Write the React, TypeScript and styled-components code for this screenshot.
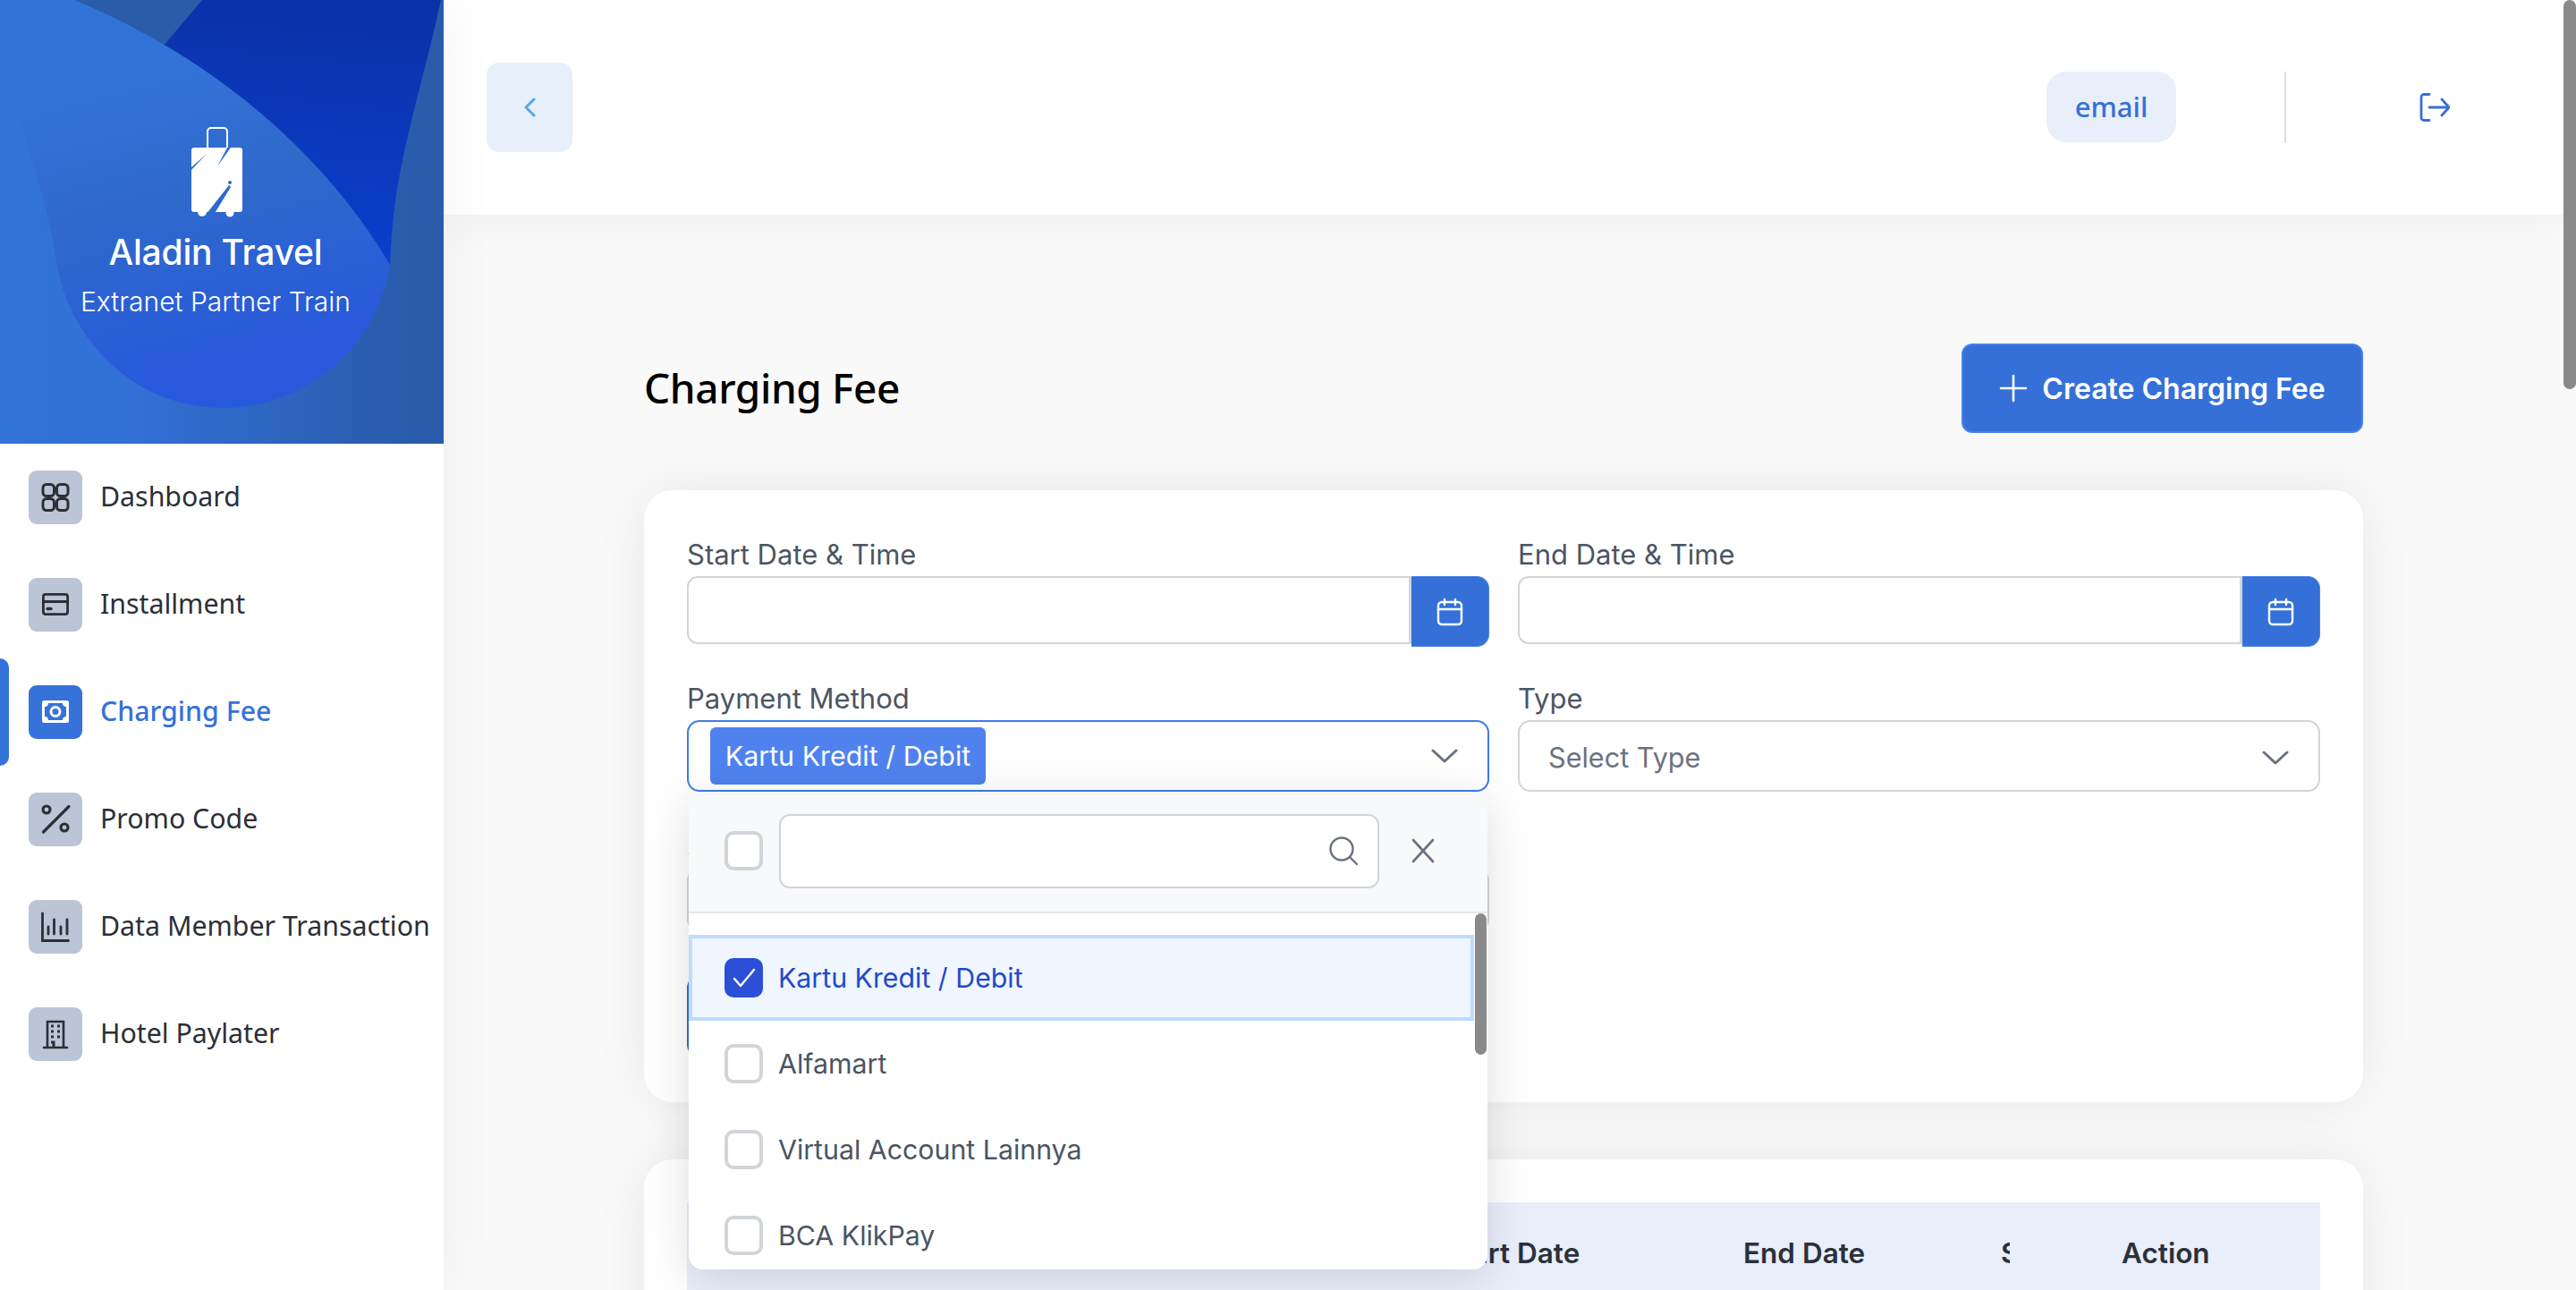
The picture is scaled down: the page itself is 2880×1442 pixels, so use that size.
import React from "react";
import styled, { createGlobalStyle } from "styled-components";

const Global = createGlobalStyle`
  html, body { margin: 0; padding: 0; background: #f9f9f9; }
  body { font-family: Inter, "Liberation Sans", sans-serif; }
  * { box-sizing: border-box; }
`;

const Page = styled.div`
  position: relative;
  display: flex;
  width: 2880px;
  height: 1442px;
  overflow: hidden;
  background: #f9f9f9;
`;

const PageScrollThumb = styled.div`
  position: absolute;
  top: 0;
  right: 0;
  width: 14px;
  height: 435px;
  border-radius: 7px;
  background: #8a8a8a;
  z-index: 20;
`;

const Sidebar = styled.aside`
  position: relative;
  z-index: 3;
  flex: 0 0 496px;
  background: #fff;
  box-shadow: 0 0 60px rgba(0, 0, 0, 0.05);
`;

const Brand = styled.div`
  position: relative;
  height: 496px;
  padding: 142px 14px 0 0;
  display: flex;
  flex-direction: column;
  align-items: center;
  overflow: hidden;
  color: #fff;
`;

const BrandArt = styled.svg`
  position: absolute;
  inset: 0;
  width: 496px;
  height: 496px;
`;

const BrandLogo = styled.svg`
  position: relative;
  width: 60px;
  height: 102px;
`;

const BrandName = styled.div`
  position: relative;
  margin-top: 10px;
  font-family: Inter, sans-serif;
  font-size: 39px;
  line-height: 56px;
  font-weight: 500;
  letter-spacing: -0.2px;
`;

const BrandSub = styled.div`
  position: relative;
  margin-top: 4px;
  font-family: Inter, sans-serif;
  font-size: 30px;
  line-height: 46px;
  font-weight: 300;
`;

const Nav = styled.nav`
  display: flex;
  flex-direction: column;
`;

const NavItem = styled.div<{ $active?: boolean }>`
  position: relative;
  height: 120px;
  padding-left: 32px;
  display: flex;
  align-items: center;
  gap: 20px;
  font-family: "Noto Sans", sans-serif;
  font-size: 30.3px;
  color: ${(p) => (p.$active ? "#3572d9" : "#2b2f36")};
  font-weight: ${(p) => (p.$active ? 500 : 400)};
`;

const NavLabel = styled.span`
  margin-bottom: 3px;
`;

const NavMark = styled.span`
  position: absolute;
  left: 0;
  top: 0;
  width: 10px;
  height: 120px;
  background: #3572d9;
  border-radius: 0 10px 10px 0;
`;

const NavIconBox = styled.span<{ $active?: boolean }>`
  flex: 0 0 60px;
  width: 60px;
  height: 60px;
  border-radius: 9px;
  background: ${(p) => (p.$active ? "#3572d9" : "#bcc5d6")};
  display: flex;
`;

const NavSvg = styled.svg`
  width: 60px;
  height: 60px;
`;

const Main = styled.main`
  flex: 1;
  min-width: 0;
  display: flex;
  flex-direction: column;
`;

const TopBar = styled.header`
  position: relative;
  z-index: 2;
  flex: 0 0 240px;
  background: #fff;
  box-shadow: 0 0 60px rgba(0, 0, 0, 0.05);
  display: flex;
  align-items: center;
  padding-left: 48px;
`;

const BackButton = styled.div`
  width: 96px;
  height: 100px;
  border-radius: 14px;
  background: #e7effa;
  display: flex;
  align-items: center;
  justify-content: center;
`;

const EmailChip = styled.div`
  margin-left: auto;
  margin-bottom: 1px;
  width: 145px;
  height: 79px;
  padding-bottom: 2px;
  border-radius: 22px;
  background: #e8effb;
  color: #3570d8;
  font-family: "Noto Sans", sans-serif;
  font-size: 31px;
  font-weight: 500;
  display: flex;
  align-items: center;
  justify-content: center;
`;

const TopDivider = styled.div`
  width: 2px;
  height: 80px;
  margin-left: 121px;
  background: #dedede;
`;

const LogoutIcon = styled.svg`
  width: 34px;
  height: 32px;
  margin-left: 149px;
  margin-right: 141px;
`;

const Content = styled.div`
  padding: 144px 238px 0 224px;
`;

const TitleRow = styled.div`
  height: 100px;
  margin-bottom: 64px;
  display: flex;
  align-items: center;
  justify-content: space-between;
`;

const Title = styled.h1`
  margin: 0 0 2px;
  font-family: "Noto Sans", sans-serif;
  font-size: 46px;
  font-weight: 500;
  color: #000;
  letter-spacing: -0.4px;
`;

const CreateButton = styled.div`
  width: 449px;
  height: 100px;
  border-radius: 12px;
  background: #3570d8;
  border: 2px solid #4a80e8;
  color: #fff;
  font-size: 32px;
  font-weight: 600;
  display: flex;
  align-items: center;
  justify-content: center;
  gap: 16px;
`;

const Card = styled.section<{ $height: number; $gap?: number }>`
  height: ${(p) => p.$height}px;
  margin-top: ${(p) => p.$gap ?? 0}px;
  padding: 48px;
  background: #fff;
  border-radius: 32px;
  box-shadow: 0 0 60px rgba(0, 0, 0, 0.07);
`;

const FilterGrid = styled.div`
  display: grid;
  grid-template-columns: 897px 897px;
  column-gap: 32px;
  row-gap: 34px;
  align-items: start;
`;

const Field = styled.div<{ $shift?: number }>`
  position: relative;
  min-width: 0;
  margin-top: ${(p) => p.$shift ?? 0}px;
`;

const Label = styled.div`
  height: 48px;
  font-size: 31px;
  line-height: 48px;
  color: #4b5563;
`;

const DateRow = styled.div`
  display: flex;
  align-items: flex-start;
`;

const DateInput = styled.div`
  flex: 1;
  height: 76px;
  background: #fff;
  border: 2px solid #d1d5db;
  border-right-width: 3px;
  border-radius: 12px 0 0 12px;
`;

const DateButton = styled.div`
  flex: 0 0 87px;
  height: 79px;
  background: #3570d8;
  border-radius: 0 14px 14px 0;
  border: 1px solid #4a80e8;
  border-left: none;
  display: flex;
  align-items: center;
  justify-content: center;
`;

const SelectBox = styled.div<{ $open?: boolean }>`
  height: 80px;
  background: #fff;
  border: 2px solid ${(p) => (p.$open ? "#3f7be8" : "#d1d5db")};
  border-radius: 14px;
  display: flex;
  align-items: center;
  padding: ${(p) => (p.$open ? "0 33px 0 24px" : "3px 33px 0 32px")};
  justify-content: space-between;
  font-size: 30.6px;
  color: #6b7280;
`;

const Chip = styled.span`
  height: 64px;
  width: 308px;
  border-radius: 6px;
  background: #4f82ee;
  color: #fff;
  font-size: 30.4px;
  display: flex;
  align-items: center;
  justify-content: center;
`;

const Chevron = styled.svg`
  width: 30px;
  height: 16px;
`;

const HiddenInput = styled.div`
  height: 68px;
  background: #fff;
  border: 2px solid #d1d5db;
  border-radius: 12px;
`;

const ApplyButton = styled.div`
  width: 320px;
  height: 88px;
  margin-top: 52px;
  border-radius: 12px;
  background: #3570d8;
`;

const Dropdown = styled.div`
  position: absolute;
  top: 128px;
  left: 2px;
  right: 2px;
  height: 534px;
  z-index: 5;
  background: #fff;
  border-radius: 0 0 16px 16px;
  overflow: hidden;
  box-shadow: 0 10px 50px rgba(0, 0, 0, 0.13);
`;

const DropdownHead = styled.div`
  height: 136px;
  padding: 0 0 2px 40px;
  background: #f8f9fb;
  border-bottom: 2px solid #e5e7eb;
  display: flex;
  align-items: center;
  gap: 18px;
`;

const Check = styled.span<{ $on?: boolean }>`
  flex: 0 0 43px;
  width: 43px;
  height: 44px;
  border-radius: 10px;
  border: 4px solid ${(p) => (p.$on ? "#2b4fd6" : "#d1d5db")};
  background: ${(p) => (p.$on ? "#2b4fd6" : "#fff")};
  display: flex;
  align-items: center;
  justify-content: center;
`;

const SearchBox = styled.div`
  width: 671px;
  height: 83px;
  background: #fff;
  border: 2px solid #d1d5db;
  border-radius: 12px;
  display: flex;
  align-items: center;
  justify-content: flex-end;
  padding-right: 21px;
`;

const CloseIcon = styled.svg`
  width: 26px;
  height: 28px;
  margin-left: 18px;
`;

const OptionList = styled.div`
  position: relative;
  padding: 24px 15px 0 0;
`;

const ListThumb = styled.div`
  position: absolute;
  top: 0;
  right: 1px;
  width: 13px;
  height: 158px;
  border-radius: 7px;
  background: #8a8a8a;
`;

const Option = styled.div<{ $on?: boolean }>`
  height: 96px;
  padding-left: ${(p) => (p.$on ? 36 : 40)}px;
  display: flex;
  align-items: center;
  gap: 17px;
  font-size: 30.3px;
  color: ${(p) => (p.$on ? "#2548c9" : "#4b5563")};
  background: ${(p) => (p.$on ? "#eff6ff" : "#fff")};
  border: ${(p) => (p.$on ? "4px solid #bfdbfe" : "none")};
`;

const TableHead = styled.div`
  height: 120px;
  background: #e8eefa;
  display: grid;
  grid-template-columns: 846px 335px 288px 135px 1fr;
  align-items: center;
  font-size: 31.5px;
  font-weight: 600;
  color: #2b303a;
  padding-bottom: 8px;
`;

const ClippedCell = styled.span`
  display: block;
  width: 10px;
  overflow: hidden;
`;

const options = ["Kartu Kredit / Debit", "Alfamart", "Virtual Account Lainnya", "BCA KlikPay"];

const CalendarIcon = () => (
  <svg width="30" height="32" viewBox="0 0 30 32" fill="none" stroke="#fff" strokeWidth="2.4" strokeLinecap="round">
    <rect x="2" y="5" width="26" height="25" rx="4" />
    <path d="M2 13h26M9 2v6M21 2v6" />
  </svg>
);

const ChevronIcon = () => (
  <Chevron viewBox="0 0 30 16" fill="none" stroke="#6b7280" strokeWidth="3" strokeLinecap="round" strokeLinejoin="round">
    <path d="M2 2l13 12L28 2" />
  </Chevron>
);

const icons: Record<string, React.ReactNode> = {
  Dashboard: (
    <g fill="none" stroke="#2b2f36" strokeWidth="3">
      <rect x="16" y="15.5" width="12.5" height="13" rx="4" />
      <rect x="31.5" y="15.5" width="12.5" height="13" rx="4" />
      <rect x="16" y="31.5" width="12.5" height="13" rx="4" />
      <rect x="31.5" y="31.5" width="12.5" height="13" rx="4" />
    </g>
  ),
  Installment: (
    <g fill="none" stroke="#2b2f36" strokeWidth="2.8" strokeLinecap="round">
      <rect x="16.4" y="18.4" width="27.2" height="22.2" rx="2.5" />
      <path d="M16.4 26.5h27.2" />
      <path d="M21 34.5h4" strokeWidth="3.4" />
    </g>
  ),
  "Charging Fee": (
    <g>
      <rect x="15" y="17" width="30" height="25" rx="2.5" fill="#fff" />
      <rect x="18" y="20" width="24" height="19" fill="#3572d9" />
      <circle cx="30" cy="29.5" r="5" fill="none" stroke="#fff" strokeWidth="3" />
      <path d="M18 20h4a4 4 0 0 1-4 4zM42 20h-4a4 4 0 0 0 4 4zM18 39h4a4 4 0 0 0-4-4zM42 39h-4a4 4 0 0 1 4-4z" fill="#fff" />
    </g>
  ),
  "Promo Code": (
    <g fill="none" stroke="#2b2f36" strokeWidth="3.2" strokeLinecap="round">
      <path d="M45 15.5L16.5 44" />
      <circle cx="20" cy="19" r="4" />
      <circle cx="40" cy="39" r="4" />
    </g>
  ),
  "Data Member Transaction": (
    <g fill="none" stroke="#2b2f36" strokeWidth="2.8" strokeLinecap="round">
      <path d="M15.5 15v30.5h29" />
      <path d="M22 30v8M28.5 22v16M36 30v8M43 22v16" />
    </g>
  ),
  "Hotel Paylater": (
    <g fill="none" stroke="#2b2f36" strokeWidth="2.6">
      <path d="M21 44.5V16h18v28.5" />
      <path d="M17 45h26" strokeLinecap="round" />
      <path d="M25 21h3M32 21h3M25 27h3M32 27h3M25 33h3M32 33h3" strokeWidth="2.8" />
      <path d="M28 45v-6h-3" strokeWidth="3" />
    </g>
  ),
};

const navNames = Object.keys(icons);

export default function App() {
  return (
    <Page>
      <Global />
      <PageScrollThumb />
      <Sidebar>
        <Brand>
          <BrandArt viewBox="0 0 496 496">
            <defs>
              <linearGradient id="bg" x1="0" y1="0" x2="1" y2="0">
                <stop offset="0" stopColor="#3374d9" />
                <stop offset="0.3" stopColor="#3270d5" />
                <stop offset="0.85" stopColor="#2a5db0" />
                <stop offset="1" stopColor="#2a5ba9" />
              </linearGradient>
              <linearGradient id="deep" x1="0.8" y1="0" x2="0.7" y2="1">
                <stop offset="0" stopColor="#0b31a8" />
                <stop offset="1" stopColor="#0a3fcc" />
              </linearGradient>
              <linearGradient id="blob" x1="0" y1="0" x2="0.25" y2="1">
                <stop offset="0" stopColor="#3374d9" />
                <stop offset="0.28" stopColor="#3372d7" />
                <stop offset="0.55" stopColor="#2f6acb" />
                <stop offset="1" stopColor="#2858dc" />
              </linearGradient>
            </defs>
            <rect width="496" height="496" fill="url(#bg)" />
            <path d="M70 0H240L170 70Z" fill="#2a5ca9" />
            <path d="M226 0H493C480 60 465 110 452 170C442 215 438 250 436 296L182 52Z" fill="url(#deep)" />
            <path d="M83 0C210 52 350 150 436 296C420 395 335 456 250 456C150 456 75 380 62 287C50 200 0 100 0 0Z" fill="url(#blob)" />
          </BrandArt>
          <BrandLogo viewBox="0 0 60 102">
            <rect x="21" y="1" width="22" height="26" rx="4" fill="none" stroke="#fff" strokeWidth="2" />
            <rect x="3" y="23" width="57" height="72" rx="3" fill="#fff" />
            <circle cx="15" cy="95" r="5" fill="#fff" />
            <circle cx="46" cy="96" r="4.5" fill="#fff" />
            <path d="M3 45L20 30L3 48ZM47 23H43L32 44Z" fill="#3071d6" />
            <path d="M45 65L19 98H28L47 67Z" fill="#2e69cc" />
            <circle cx="46" cy="62" r="2" fill="#2e69cc" />
          </BrandLogo>
          <BrandName>Aladin Travel</BrandName>
          <BrandSub>Extranet Partner Train</BrandSub>
        </Brand>
        <Nav>
          {navNames.map((name) => {
            const active = name === "Charging Fee";
            return (
              <NavItem key={name} $active={active}>
                {active && <NavMark />}
                <NavIconBox $active={active}>
                  <NavSvg viewBox="0 0 60 60">{icons[name]}</NavSvg>
                </NavIconBox>
                <NavLabel>{name}</NavLabel>
              </NavItem>
            );
          })}
        </Nav>
      </Sidebar>
      <Main>
        <TopBar>
          <BackButton>
            <svg width="14" height="22" viewBox="0 0 14 22" fill="none" stroke="#5aa7e0" strokeWidth="3" strokeLinecap="round" strokeLinejoin="round">
              <path d="M12 2L3 11l9 9" />
            </svg>
          </BackButton>
          <EmailChip>email</EmailChip>
          <TopDivider />
          <LogoutIcon viewBox="0 0 34 32" fill="none" stroke="#3570d8" strokeWidth="2.8" strokeLinecap="round" strokeLinejoin="round">
            <path d="M11 1.5H5a3 3 0 0 0-3 3v23a3 3 0 0 0 3 3h6" />
            <path d="M11 16h21M25 7l8 9-8 9" />
          </LogoutIcon>
        </TopBar>
        <Content>
          <TitleRow>
            <Title>Charging Fee</Title>
            <CreateButton>
              <svg width="32" height="32" viewBox="0 0 32 32" fill="none" stroke="#fff" strokeWidth="2.6" strokeLinecap="round">
                <path d="M16 2v28M2 16h28" />
              </svg>
              Create Charging Fee
            </CreateButton>
          </TitleRow>
          <Card $height={684}>
            <FilterGrid>
              <Field>
                <Label>Start Date &amp; Time</Label>
                <DateRow>
                  <DateInput />
                  <DateButton><CalendarIcon /></DateButton>
                </DateRow>
              </Field>
              <Field>
                <Label>End Date &amp; Time</Label>
                <DateRow>
                  <DateInput />
                  <DateButton><CalendarIcon /></DateButton>
                </DateRow>
              </Field>
              <Field>
                <Label>Payment Method</Label>
                <SelectBox $open>
                  <Chip>Kartu Kredit / Debit</Chip>
                  <ChevronIcon />
                </SelectBox>
                <Dropdown>
                  <DropdownHead>
                    <Check />
                    <SearchBox>
                      <svg width="34" height="34" viewBox="0 0 34 34" fill="none" stroke="#6b7280" strokeWidth="2.4" strokeLinecap="round">
                        <circle cx="15" cy="15" r="12.5" />
                        <path d="M24 24l8 8" />
                      </svg>
                    </SearchBox>
                    <CloseIcon viewBox="0 0 26 28" fill="none" stroke="#6b7280" strokeWidth="2.6" strokeLinecap="round">
                      <path d="M2 2l22 24M24 2L2 26" />
                    </CloseIcon>
                  </DropdownHead>
                  <OptionList>
                    <ListThumb />
                    {options.map((o, i) => (
                      <Option key={o} $on={i === 0}>
                        <Check $on={i === 0}>
                          {i === 0 && (
                            <svg width="28" height="24" viewBox="0 0 28 24" fill="none" stroke="#fff" strokeWidth="2.4" strokeLinecap="round" strokeLinejoin="round">
                              <path d="M3 13l7 8L25 3" />
                            </svg>
                          )}
                        </Check>
                        {o}
                      </Option>
                    ))}
                  </OptionList>
                </Dropdown>
              </Field>
              <Field>
                <Label>Type</Label>
                <SelectBox>
                  Select Type
                  <ChevronIcon />
                </SelectBox>
              </Field>
              <Field $shift={5}>
                <Label>Status</Label>
                <HiddenInput />
                <ApplyButton />
              </Field>
            </FilterGrid>
          </Card>
          <Card $height={400} $gap={64}>
            <TableHead>
              <span />
              <span>Start Date</span>
              <span>End Date</span>
              <ClippedCell>Status</ClippedCell>
              <span>Action</span>
            </TableHead>
          </Card>
        </Content>
      </Main>
    </Page>
  );
}
